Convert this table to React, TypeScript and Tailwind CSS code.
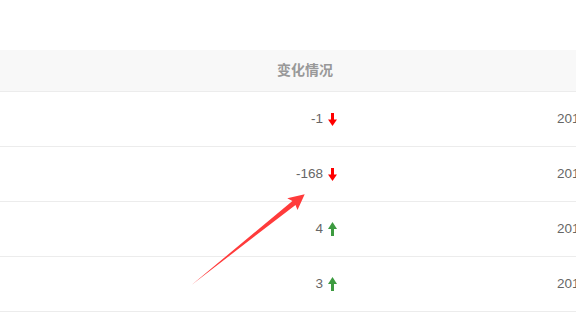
import React from "react";

const rows = [
  { v: "-1", up: false },
  { v: "-168", up: false },
  { v: "4", up: true },
  { v: "3", up: true },
];

function Down() {
  return (
    <svg width="9" height="13" viewBox="0 0 9 13" className="block shrink-0">
      <rect x="3" y="0" width="3" height="8" fill="#ff0000" />
      <polygon points="0,6.5 9,6.5 4.5,13" fill="#ff0000" />
    </svg>
  );
}

function Up() {
  return (
    <svg width="9" height="14" viewBox="0 0 9 14" className="block shrink-0">
      <rect x="3" y="6" width="3" height="8" fill="#3d9b40" />
      <polygon points="0,7 9,7 4.5,0" fill="#3d9b40" />
    </svg>
  );
}

export default function App() {
  return (
    <div
      className="relative w-[576px] h-[334px] overflow-hidden bg-white"
      style={{ fontFamily: '"Liberation Sans", "Noto Sans CJK SC", sans-serif' }}
    >
      <div className="pt-[50px]">
        <div className="flex h-[42px] items-center bg-[#f8f8f8] border-b border-[#ececec]">
          <div className="w-[333px] shrink-0 text-right text-[14px] font-bold text-[#999]">变化情况</div>
        </div>
        {rows.map((r, i) => (
          <div key={i} className="flex h-[55px] items-center border-b border-[#ececec] text-[13.5px] text-[#666]">
            <div className="w-[337px] shrink-0 flex items-center justify-end gap-[5px]">
              <span>{r.v}</span>
              {r.up ? <Up /> : <Down />}
            </div>
            <div className="ml-[220px] shrink-0 whitespace-nowrap">2019-01-01</div>
          </div>
        ))}
      </div>
      <svg className="absolute left-0 top-0 pointer-events-none" width="576" height="334">
        <polygon
          points="191.5,285 292.4,201 287.3,198.3 304.7,194.3 297.5,210 295.5,204.9"
          fill="#ff3b3b"
        />
      </svg>
    </div>
  );
}
